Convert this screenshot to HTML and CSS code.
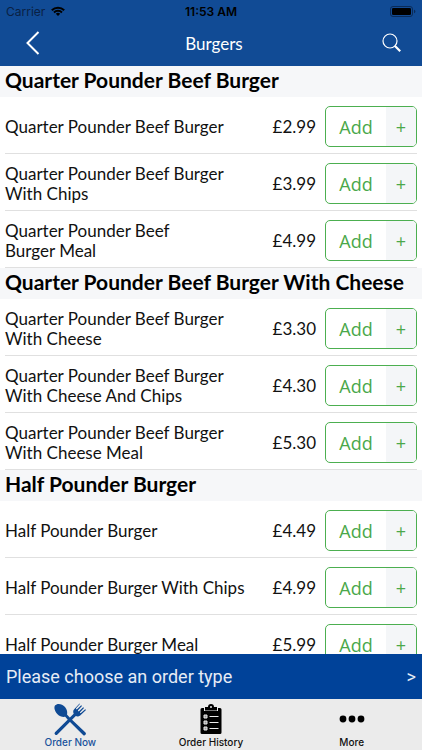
FILE: index.html
```html
<!DOCTYPE html>
<html lang="en">
<head>
    <meta charset="UTF-8">
    <meta name="viewport" content="width=device-width, initial-scale=1.0">
    <title>Burgers</title>
    <link rel="stylesheet" href="styles.css">
</head>
<body>
    <header class="header">
        <div class="status-bar">
            <div class="carrier">
                <span>Carrier</span>
                <svg width="14" height="10" viewBox="0 0 14 10" fill="none" stroke="#000" stroke-width="2">
                    <path d="M0.8 4.2a8.8 8.8 0 0 1 12.4 0M3 6.5a5.7 5.7 0 0 1 8 0"/>
                    <path d="M7 10L4.8 7.8a3.1 3.1 0 0 1 4.4 0z" fill="#000" stroke="none"/>
                </svg>
            </div>
            <span class="time">11:53 AM</span>
            <div class="battery">
                <svg width="26" height="11" viewBox="0 0 26 11">
                    <rect x="0.5" y="0.5" width="22" height="10" rx="2.5" fill="none" stroke="#0a2b58"/>
                    <rect x="2" y="2" width="19" height="7" rx="1.3"/>
                    <path d="M24 3.7v3.6c0.9-0.3 1.4-1 1.4-1.8s-0.5-1.5-1.4-1.8z" fill="#0a2b58"/>
                </svg>
            </div>
        </div>
        <div class="nav-bar">
            <button type="button" class="back" aria-label="Back">
                <svg width="14" height="24" viewBox="0 0 14 24" fill="none" stroke="#fff" stroke-width="2">
                    <path d="M12.5 1L1.5 12l11 11"/>
                </svg>
            </button>
            <h1>Burgers</h1>
            <button type="button" class="search" aria-label="Search">
                <svg width="20" height="20" viewBox="0 0 20 20" fill="none" stroke="#fff">
                    <circle cx="8" cy="8" r="7" stroke-width="1.2"/>
                    <path d="M12.7 12.7l5.5 5.5" stroke-width="2.2"/>
                </svg>
            </button>
        </div>
    </header>

    <main class="menu">
        <section>
            <h2>Quarter Pounder Beef Burger</h2>
            <ul>
                <li>
                    <span class="name">Quarter Pounder Beef Burger</span>
                    <span class="price">£2.99</span>
                    <button type="button" class="add"><span>Add</span><span class="plus">+</span></button>
                </li>
                <li>
                    <span class="name">Quarter Pounder Beef Burger<br>With Chips</span>
                    <span class="price">£3.99</span>
                    <button type="button" class="add"><span>Add</span><span class="plus">+</span></button>
                </li>
                <li>
                    <span class="name">Quarter Pounder Beef<br>Burger Meal</span>
                    <span class="price">£4.99</span>
                    <button type="button" class="add"><span>Add</span><span class="plus">+</span></button>
                </li>
            </ul>
        </section>
        <section>
            <h2>Quarter Pounder Beef Burger With Cheese</h2>
            <ul>
                <li>
                    <span class="name">Quarter Pounder Beef Burger<br>With Cheese</span>
                    <span class="price">£3.30</span>
                    <button type="button" class="add"><span>Add</span><span class="plus">+</span></button>
                </li>
                <li>
                    <span class="name">Quarter Pounder Beef Burger<br>With Cheese And Chips</span>
                    <span class="price">£4.30</span>
                    <button type="button" class="add"><span>Add</span><span class="plus">+</span></button>
                </li>
                <li>
                    <span class="name">Quarter Pounder Beef Burger<br>With Cheese Meal</span>
                    <span class="price">£5.30</span>
                    <button type="button" class="add"><span>Add</span><span class="plus">+</span></button>
                </li>
            </ul>
        </section>
        <section>
            <h2>Half Pounder Burger</h2>
            <ul>
                <li>
                    <span class="name">Half Pounder Burger</span>
                    <span class="price">£4.49</span>
                    <button type="button" class="add"><span>Add</span><span class="plus">+</span></button>
                </li>
                <li>
                    <span class="name">Half Pounder Burger With Chips</span>
                    <span class="price">£4.99</span>
                    <button type="button" class="add"><span>Add</span><span class="plus">+</span></button>
                </li>
                <li>
                    <span class="name">Half Pounder Burger Meal</span>
                    <span class="price">£5.99</span>
                    <button type="button" class="add"><span>Add</span><span class="plus">+</span></button>
                </li>
            </ul>
        </section>
    </main>

    <button type="button" class="order-type">
        <span>Please choose an order type</span>
        <span>&gt;</span>
    </button>

    <nav class="tabs">
        <a href="#" class="active">
            <svg width="34" height="34" viewBox="0 0 34 34" fill="#0f4a94">
                <path d="M2 3.5C4 1 9 1.500 12 5c2.200 2.600 2.600 5.500 2 7.600l3.200 3.500L32.500 30.500a1.700 1.700 0 0 1-2.400 2.400L15 18l-2.800-3.200c-2.500 0.400-5.500-0.200-7.700-2.600C1.500 8.800 0.800 5.500 2 3.500z"/>
                <path d="M26.500 1.500l-5.300 5.800c-1.300 1.500-1.200 3-0.500 4.400L2 30.200a1.700 1.700 0 0 0 2.400 2.400l18.400-18.500c1.500 0.700 3 0.600 4.400-0.700l5.800-5.300-0.800-0.800-4.600 4-0.800-0.800 4.200-4.500-0.800-0.800-4.500 4.200-0.900-0.900 4.200-4.500-0.800-0.800-4.500 4.200-0.800-0.800 4-4.500z"/>
            </svg>
            <span>Order Now</span>
        </a>
        <a href="#">
            <svg width="34" height="34" viewBox="0 0 34 34">
                <path d="M8 6h2v3h14V6h2a1.500 1.500 0 0 1 1.500 1.500v23A1.500 1.500 0 0 1 26 32H8a1.500 1.500 0 0 1-1.500-1.500v-23A1.500 1.500 0 0 1 8 6z"/>
                <path fill-rule="evenodd" d="M11 5h3a3 3 0 0 1 6 0h3v3.400H11zM17 4a1 1 0 1 0 0 2a1 1 0 1 0 0-2z"/>
                <g fill="none" stroke="#ebebeb">
                    <path d="M10 13h3v3h-3zM10 19h3v3h-3zM10 25h3v3h-3z" fill="#999"/>
                    <path d="M15.500 14.500h9M15.500 20.500h9M15.500 26.500h9"/>
                </g>
            </svg>
            <span>Order History</span>
        </a>
        <a href="#">
            <svg width="34" height="34" viewBox="0 0 34 34">
                <circle cx="8" cy="17" r="3.400"/>
                <circle cx="17" cy="17" r="3.400"/>
                <circle cx="26" cy="17" r="3.400"/>
            </svg>
            <span>More</span>
        </a>
    </nav>
</body>
</html>
```
FILE: styles.css
```css
* {
    box-sizing: border-box;
}

body {
    margin: 0;
    height: 100vh;
    display: flex;
    flex-direction: column;
    background-color: #fff;
    color: #111;
    font-family: Lato, sans-serif;
}

button {
    margin: 0;
    padding: 0;
    border: none;
    background: none;
    cursor: pointer;
}

svg {
    display: block;
}

.header {
    background-color: #114b95;
}

.status-bar {
    display: grid;
    grid-template-columns: 1fr auto 1fr;
    align-items: center;
    height: 22px;
    padding: 0 6px;
    color: #000;
    font-family: Inter, sans-serif;
    font-size: 12px;
}

.carrier {
    display: flex;
    align-items: center;
    gap: 6px;
    color: #0a2144;
}

.time {
    font-weight: 600;
}

.battery {
    justify-self: end;
}

.nav-bar {
    display: grid;
    grid-template-columns: 1fr auto 1fr;
    align-items: center;
    height: 44px;
    padding: 0 20px 2px 26px;
}

.nav-bar h1 {
    margin: 0;
    color: #fff;
    font-size: 17px;
    font-weight: 400;
}

.back {
    justify-self: start;
}

.search {
    justify-self: end;
}

.menu {
    flex: 1;
    min-height: 0;
    overflow: hidden;
}

.menu h2 {
    margin: 0;
    padding: 0 5px;
    height: 31px;
    line-height: 28px;
    background-color: #f6f7f9;
    color: #000;
    font-size: 21px;
    font-weight: 700;
    white-space: nowrap;
}

.menu ul {
    margin: 0;
    padding: 0 5px;
    list-style: none;
}

.menu li {
    display: flex;
    align-items: center;
    height: 57px;
    padding-top: 3px;
    border-bottom: 1px solid #e0e0e0;
}

.name {
    flex: 1;
    font-size: 17px;
    line-height: 20px;
    white-space: nowrap;
}

.price {
    margin-right: 9px;
    font-size: 17px;
}

.add {
    display: flex;
    width: 92px;
    height: 41px;
    overflow: hidden;
    border: 1px solid #4caf50;
    border-radius: 5px;
    color: #4aa84a;
    font-family: "Open Sans", sans-serif;
    font-size: 18px;
    line-height: 40px;
}

.add span {
    flex: 2;
}

.add .plus {
    flex: 1;
    background-color: #f4f6f8;
}

.order-type {
    display: flex;
    justify-content: space-between;
    align-items: center;
    height: 45px;
    padding: 0 6px;
    background-color: #004299;
    color: #e6ecf5;
    font-family: Roboto, sans-serif;
    font-size: 18px;
}

.tabs {
    display: grid;
    grid-template-columns: repeat(3, 1fr);
    height: 51px;
    background-color: #ebebeb;
}

.tabs a {
    display: flex;
    flex-direction: column;
    align-items: center;
    padding-top: 3px;
    color: #111;
    font-family: Inter, sans-serif;
    font-size: 10px;
    font-weight: 500;
    line-height: 13px;
    text-decoration: none;
}

.tabs .active {
    color: #1a539c;
}
```
